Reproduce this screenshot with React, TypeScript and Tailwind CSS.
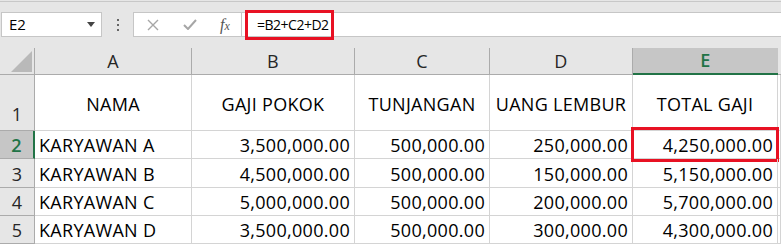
import React from "react";

const cols = ["A", "B", "C", "D", "E"];

const rows = [
  { n: "2", name: "KARYAWAN A", b: "3,500,000.00", c: "500,000.00", d: "250,000.00", e: "4,250,000.00", h: "h-[28px]" },
  { n: "3", name: "KARYAWAN B", b: "4,500,000.00", c: "500,000.00", d: "150,000.00", e: "5,150,000.00", h: "h-[29px]" },
  { n: "4", name: "KARYAWAN C", b: "5,000,000.00", c: "500,000.00", d: "200,000.00", e: "5,700,000.00", h: "h-[28px]" },
  { n: "5", name: "KARYAWAN D", b: "3,500,000.00", c: "500,000.00", d: "300,000.00", e: "4,300,000.00", h: "h-[28px]" },
];

function Cell({ children, className = "" }: { children?: React.ReactNode; className?: string }) {
  return <div className={`border-r border-b border-[#d4d4d4] flex items-center whitespace-nowrap ${className}`}>{children}</div>;
}

export default function App() {
  return (
    <div className="w-[781px] h-[244px] overflow-hidden bg-white font-['Open_Sans',sans-serif] text-[18px] tracking-[0.3px] text-black">
      {/* ribbon strip + formula bar */}
      <div className="h-[48px] bg-[#e6e6e6] pt-px tracking-normal">
        <div className="h-px bg-[#c8c8c8]" />
        <div className="flex mt-[10px] h-[25px]">
          <div className="ml-px w-[101px] bg-white border border-[#c6c6c6] flex items-center justify-between pl-[7px] pr-[6px]">
            <span className="text-[15px] leading-none">E2</span>
            <svg width="8" height="5" viewBox="0 0 8 5">
              <path d="M0 0h8L4 5z" fill="#444" />
            </svg>
          </div>
          <div className="w-[31px] flex flex-col items-center justify-center gap-[3px]">
            <span className="w-[2px] h-[2px] bg-[#666]" />
            <span className="w-[2px] h-[2px] bg-[#666]" />
            <span className="w-[2px] h-[2px] bg-[#666]" />
          </div>
          <div className="w-[109px] bg-white border border-[#c6c6c6] flex items-center">
            <svg className="ml-[13px]" width="12" height="12" viewBox="0 0 12 12">
              <path d="M1 1l10 10M11 1L1 11" stroke="#a6a6a6" strokeWidth="1.4" fill="none" />
            </svg>
            <svg className="ml-[24px]" width="14" height="11" viewBox="0 0 14 11">
              <path d="M1 6l4 4 8-9" stroke="#a6a6a6" strokeWidth="2" fill="none" />
            </svg>
            <span className="ml-[23px] font-['Liberation_Serif',serif] italic text-[#555] text-[16px] leading-none">
              f<span className="text-[12px]">x</span>
            </span>
          </div>
          <div className="relative flex-1 bg-white border-y border-[#c6c6c6] flex items-center pl-[15px]">
            <span className="text-[14px] leading-none tracking-[-0.5px]">=B2+C2+D2</span>
            <div className="absolute left-[3px] top-[-3px] w-[89px] h-[30px] border-[3px] border-[#e81123]" />
          </div>
        </div>
      </div>

      {/* sheet */}
      <div className="grid grid-cols-[35px_157px_163px_135px_143px_145px_3px]">
        {/* column headers */}
        <div className="h-[27px] bg-[#e6e6e6] border-r border-b border-[#ababab] flex items-end justify-end pr-[2px] pb-[2px]">
          <svg width="21" height="21" viewBox="0 0 21 21">
            <path d="M21 0V21H0z" fill="#b9b9b9" />
          </svg>
        </div>
        {cols.map((c) =>
          c === "E" ? (
            <div key={c} className="h-[27px] bg-[#c6c6c6] border-b-2 border-[#217346] flex items-center justify-center text-[#217346] font-semibold">
              {c}
            </div>
          ) : (
            <div key={c} className="h-[27px] bg-[#e6e6e6] border-r border-b border-[#ababab] flex items-center justify-center text-[#262626]">
              {c}
            </div>
          )
        )}
        <div className="h-[27px] bg-[#e6e6e6] border-b border-[#ababab]" />

        {/* row 1 */}
        <div className="h-[56px] bg-[#e6e6e6] border-r border-b border-[#ababab] flex items-end justify-center pb-[2px] text-[#262626]">
          1
        </div>
        <Cell className="justify-center pt-[4px]">NAMA</Cell>
        <Cell className="justify-center pt-[4px]">GAJI POKOK</Cell>
        <Cell className="justify-center pt-[4px]">TUNJANGAN</Cell>
        <Cell className="justify-center pt-[4px]">UANG LEMBUR</Cell>
        <Cell className="justify-center pt-[4px]">TOTAL GAJI</Cell>
        <Cell />

        {rows.map((r) => (
          <React.Fragment key={r.n}>
            {r.n === "2" ? (
              <div className={`${r.h} bg-[#c6c6c6] border-r-2 border-r-[#217346] border-b border-b-[#ababab] flex items-center justify-center pt-[2px] text-[#217346] font-semibold`}>
                {r.n}
              </div>
            ) : (
              <div className={`${r.h} bg-[#e6e6e6] border-r border-b border-[#ababab] flex items-center justify-center pt-[2px] text-[#262626]`}>
                {r.n}
              </div>
            )}
            <Cell className={`${r.h} pl-[4px] pt-[2px]`}>{r.name}</Cell>
            <Cell className={`${r.h} justify-end pr-[4px] pt-[2px]`}>{r.b}</Cell>
            <Cell className={`${r.h} justify-end pr-[4px] pt-[2px]`}>{r.c}</Cell>
            <Cell className={`${r.h} justify-end pr-[4px] pt-[2px]`}>{r.d}</Cell>
            <Cell className={`${r.h} justify-end pr-[4px] pt-[2px] relative`}>
              {r.e}
              {r.n === "2" && (
                <div className="absolute left-[-2px] right-[-2px] top-[-4px] bottom-[-4px] border-[3px] border-[#e81123]" />
              )}
            </Cell>
            <Cell className={r.h} />
          </React.Fragment>
        ))}
      </div>
    </div>
  );
}
